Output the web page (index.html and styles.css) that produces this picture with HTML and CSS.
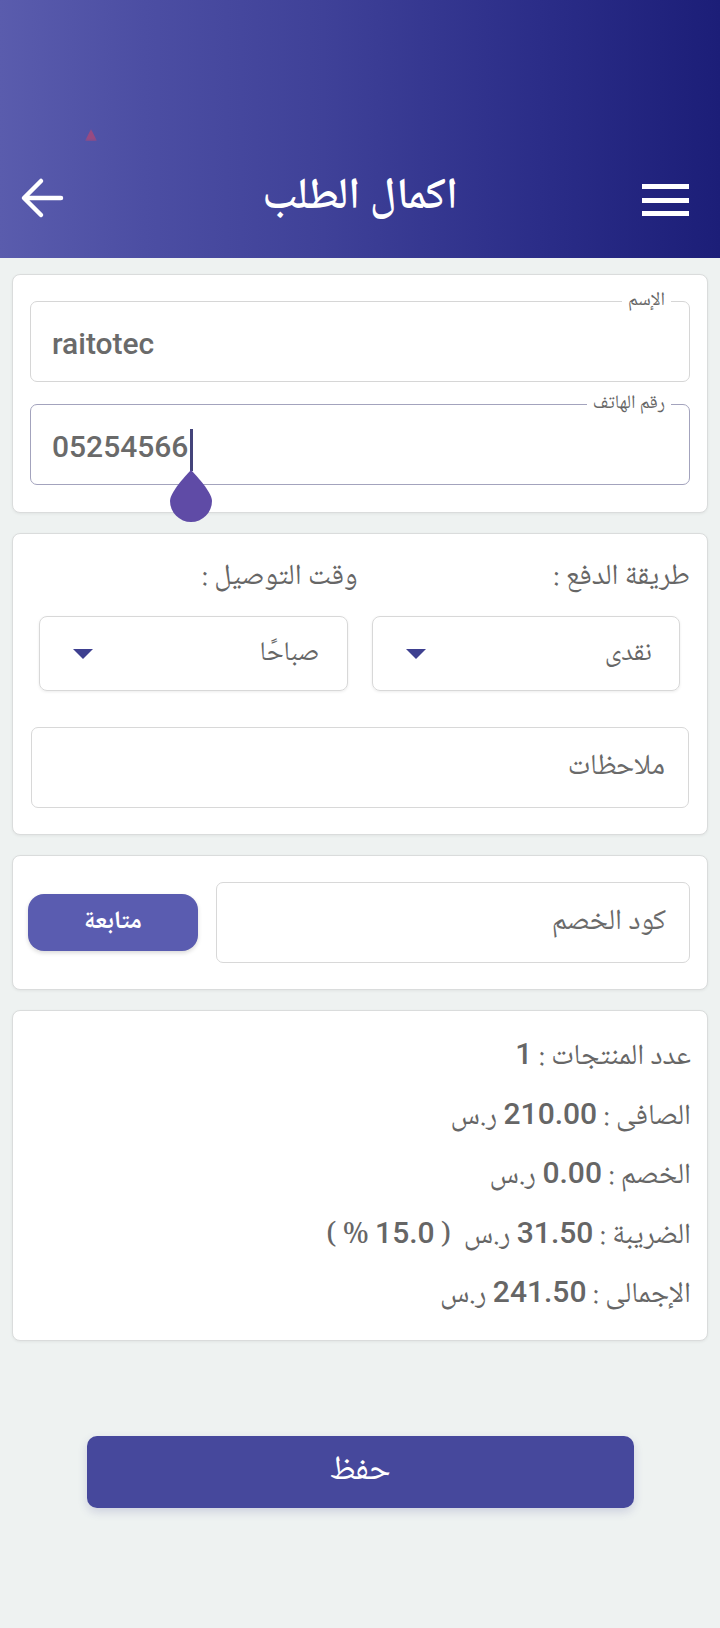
FILE: index.html
```html
<!DOCTYPE html>
<html lang="ar" dir="rtl">
<head>
    <meta charset="UTF-8">
    <meta name="viewport" content="width=device-width, initial-scale=1.0">
    <title>اكمال الطلب</title>
    <link rel="stylesheet" href="styles.css">
</head>
<body>
    <header class="appbar">
        <span class="status-mark"></span>
        <div class="toolbar">
            <button class="icon-btn menu" aria-label="القائمة">
                <span></span><span></span><span></span>
            </button>
            <h1>اكمال الطلب</h1>
            <button class="icon-btn back" aria-label="رجوع">
                <svg width="44" height="44" viewBox="0 0 44 44">
                    <path d="M41 22H5M21 5L4 22l17 17" fill="none" stroke="#fff" stroke-width="4.5" stroke-linecap="round" stroke-linejoin="round"/>
                </svg>
            </button>
        </div>
    </header>

    <main class="content">
        <section class="card">
            <fieldset class="field">
                <legend>الإسم</legend>
                <div class="value">raitotec</div>
            </fieldset>
            <fieldset class="field focused">
                <legend>رقم الهاتف</legend>
                <div class="value">05254566<span class="caret"><svg class="handle" width="44" height="53" viewBox="0 0 44 53"><path d="M22 0C22 0 1 21 1 31a21 21 0 0 0 42 0C43 21 22 0 22 0z" fill="#5f4ba6"/></svg></span></div>
            </fieldset>
        </section>

        <section class="card">
            <div class="choices">
                <div class="choice">
                    <span class="choice-label">طريقة الدفع :</span>
                    <div class="select">
                        <span>نقدى</span>
                        <span class="arrow"></span>
                    </div>
                </div>
                <div class="choice">
                    <span class="choice-label">وقت التوصيل :</span>
                    <div class="select">
                        <span>صباحًا</span>
                        <span class="arrow"></span>
                    </div>
                </div>
            </div>
            <div class="input notes">ملاحظات</div>
        </section>

        <section class="card coupon">
            <div class="input">كود الخصم</div>
            <button class="btn-small">متابعة</button>
        </section>

        <section class="card summary">
            <p>عدد المنتجات : <b>1</b></p>
            <p>الصافى : <b>210.00</b> ر.س</p>
            <p>الخصم : <b>0.00</b> ر.س</p>
            <p>الضريبة : <b>31.50</b> ر.س &nbsp;( <b>15.0</b> % )</p>
            <p>الإجمالى : <b>241.50</b> ر.س</p>
        </section>

        <button class="btn-save">حفظ</button>
    </main>
</body>
</html>
```

FILE: styles.css
```css
html, body {
    margin: 0;
    padding: 0;
}
body {
    font-family: Roboto, "Noto Naskh Arabic", "Noto Sans Arabic", "DejaVu Sans", sans-serif;
    background: #eef2f1;
    color: #666;
    width: 720px;
    min-height: 1628px;
}
.appbar {
    position: relative;
    height: 258px;
    background: linear-gradient(to right, #5a5cad 0%, #4c4ea3 20%, #3f4198 45%, #2b2d88 75%, #1c1e78 100%);
    display: flex;
    flex-direction: column;
    justify-content: flex-end;
}
.status-mark {
    position: absolute;
    left: 85px;
    top: 129px;
    width: 12px;
    height: 12px;
    background: #c8456a;
    clip-path: polygon(50% 0, 100% 100%, 0 100%);
    filter: blur(1.5px);
    opacity: .6;
}
.toolbar {
    height: 80px;
    margin-bottom: 20px;
    display: grid;
    grid-template-columns: 1fr auto 1fr;
    align-items: center;
    padding: 0 20px;
}
.toolbar h1 {
    margin: 0;
    color: #fff;
    font-size: 44px;
    font-weight: 600;
    font-family: "Noto Naskh Arabic", "Noto Sans Arabic", "DejaVu Sans", sans-serif;
}
.icon-btn {
    background: none;
    border: 0;
    padding: 0;
    display: flex;
    flex-direction: column;
    justify-content: center;
}
.menu {
    justify-self: start;
    width: 47px;
    gap: 8.5px;
    margin-top: 4px;
    margin-inline-start: 11px;
}
.back {
    justify-self: end;
}
.menu span {
    display: block;
    height: 5px;
    background: #fff;
}
.content {
    padding: 16px 12px 0;
    display: flex;
    flex-direction: column;
    gap: 20px;
}
.card {
    background: #fff;
    border: 1px solid #dadcdc;
    border-radius: 8px;
    box-shadow: 0 1px 3px rgba(0, 0, 0, .06);
}
.card:first-child {
    padding: 16px 17px 27px;
    display: flex;
    flex-direction: column;
    gap: 12px;
}
.field {
    margin: 0;
    border: 1.5px solid #d6d6d6;
    border-radius: 7px;
    padding: 5px 21px 9px;
    min-width: 0;
}
.field legend {
    font-size: 19px;
    line-height: 20px;
    padding: 0 6px;
    margin-right: -3px;
    color: #666;
    font-family: "Noto Naskh Arabic", "Noto Sans Arabic", "DejaVu Sans", sans-serif;
}
.field.focused {
    border-color: #a3a3bd;
}
.value {
    direction: ltr;
    text-align: left;
    font-size: 30px;
    font-weight: 500;
    line-height: 56px;
    color: #6a6a6a;
}
.caret {
    position: relative;
    display: inline-block;
    width: 3px;
    height: 42px;
    margin-left: 2px;
    background: #44447a;
    vertical-align: -14px;
}
.handle {
    position: absolute;
    top: 41px;
    left: -21px;
}
.card:nth-child(2) {
    padding: 26px 18px 26px;
}
.choices {
    display: grid;
    grid-template-columns: 1fr 1fr;
    gap: 24px;
    padding: 0 9px 0 8px;
}
.choice {
    display: flex;
    flex-direction: column;
    gap: 20px;
}
.choice-label {
    font-family: "Noto Naskh Arabic", "Noto Sans Arabic", "DejaVu Sans", sans-serif;
    font-size: 29px;
    line-height: 36px;
    margin-right: -10px;
    color: #666;
}
.select {
    height: 73px;
    border: 1px solid #d8d8d8;
    border-radius: 8px;
    box-shadow: 0 1px 3px rgba(0, 0, 0, .08);
    display: flex;
    align-items: center;
    justify-content: space-between;
    padding: 0 27px 0 33px;
    font-family: "Noto Naskh Arabic", "Noto Sans Arabic", "DejaVu Sans", sans-serif;
    font-size: 27px;
    color: #666;
}
.arrow {
    width: 0;
    height: 0;
    border-left: 10px solid transparent;
    border-right: 10px solid transparent;
    border-top: 10px solid #3e4090;
}
.input {
    height: 79px;
    border: 1.5px solid #d8d8d8;
    border-radius: 7px;
    display: flex;
    align-items: center;
    padding: 0 23px;
    font-family: "Noto Naskh Arabic", "Noto Sans Arabic", "DejaVu Sans", sans-serif;
    font-size: 29px;
    color: #6a6a6a;
}
.notes {
    margin-top: 36px;
}
.coupon {
    padding: 26px 17px 26px 15px;
    display: flex;
    align-items: center;
    gap: 18px;
}
.coupon .input {
    flex: 1;
}
.btn-small {
    width: 170px;
    height: 57px;
    border: 0;
    border-radius: 16px;
    background: #5a5cb0;
    color: #fff;
    font-family: "Noto Naskh Arabic", "Noto Sans Arabic", "DejaVu Sans", sans-serif;
    font-size: 25px;
    font-weight: bold;
    box-shadow: 0 2px 4px rgba(0, 0, 0, .15);
}
.summary {
    padding: 17px 16px 14px;
}
.summary p {
    margin: 0;
    height: 59.5px;
    line-height: 59.5px;
    font-family: "Noto Naskh Arabic", "Noto Sans Arabic", "DejaVu Sans", sans-serif;
    font-size: 29px;
    color: #666;
    white-space: nowrap;
}
.summary b {
    font-family: Roboto, sans-serif;
    font-size: 30px;
    font-weight: 500;
    line-height: 1;
}
.btn-save {
    align-self: center;
    width: 547px;
    height: 72px;
    margin-top: 75px;
    border: 0;
    border-radius: 10px;
    background: #46489c;
    color: #fff;
    font-family: "Noto Naskh Arabic", "Noto Sans Arabic", "DejaVu Sans", sans-serif;
    font-size: 34px;
    box-shadow: 0 4px 10px rgba(60, 60, 140, .18);
}
```
